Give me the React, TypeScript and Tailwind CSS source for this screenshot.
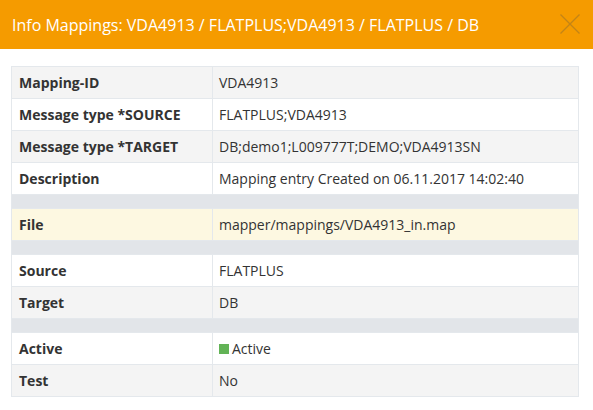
import React from "react";

type Row =
  | { kind: "row"; label: string; value: React.ReactNode; bg: string }
  | { kind: "gap" };

const rows: Row[] = [
  { kind: "row", label: "Mapping-ID", value: "VDA4913", bg: "bg-[#f4f4f4]" },
  { kind: "row", label: "Message type *SOURCE", value: "FLATPLUS;VDA4913", bg: "bg-white" },
  { kind: "row", label: "Message type *TARGET", value: "DB;demo1;L009777T;DEMO;VDA4913SN", bg: "bg-[#f4f4f4]" },
  { kind: "row", label: "Description", value: "Mapping entry Created on 06.11.2017 14:02:40", bg: "bg-white" },
  { kind: "gap" },
  { kind: "row", label: "File", value: "mapper/mappings/VDA4913_in.map", bg: "bg-[#fdf8e1]" },
  { kind: "gap" },
  { kind: "row", label: "Source", value: "FLATPLUS", bg: "bg-white" },
  { kind: "row", label: "Target", value: "DB", bg: "bg-[#f4f4f4]" },
  { kind: "gap" },
  {
    kind: "row",
    label: "Active",
    value: (
      <span className="flex items-center gap-[3px]">
        <span className="inline-block h-[10px] w-[10px] bg-[#62b356]" />
        Active
      </span>
    ),
    bg: "bg-white",
  },
  { kind: "row", label: "Test", value: "No", bg: "bg-[#f4f4f4]" },
];

export default function App() {
  return (
    <div className="h-[410px] w-[593px] bg-white font-['Open_Sans',sans-serif] text-[#333]">
      <div className="flex h-[49px] items-center justify-between bg-[#f59b00] pl-[12px] pr-[13px]">
        <h1 className="text-[16px] text-white">Info Mappings: VDA4913 / FLATPLUS;VDA4913 / FLATPLUS / DB</h1>
        <svg width="20" height="20" viewBox="0 0 20 20" className="mb-[2px]">
          <path d="M0.5 0.5 L19.5 19.5 M19.5 0.5 L0.5 19.5" stroke="#c48416" strokeWidth="1.3" fill="none" />
        </svg>
      </div>
      <div className="px-[11px] pt-[17px]">
        <table className="w-[568px] border-collapse border border-[#e4e8ec] text-[14px]">
          <tbody>
            {rows.map((r, i) =>
              r.kind === "gap" ? (
                <tr key={i} className="h-[14px] bg-[#e2e5e9]">
                  <td colSpan={2} className="p-0" />
                </tr>
              ) : (
                <tr key={i} className={`h-[32px] ${r.bg}`}>
                  <td className="w-[201px] border border-[#e4e8ec] pl-[7px] font-bold">{r.label}</td>
                  <td className="border border-[#e4e8ec] pl-[6px]">{r.value}</td>
                </tr>
              )
            )}
          </tbody>
        </table>
      </div>
    </div>
  );
}
